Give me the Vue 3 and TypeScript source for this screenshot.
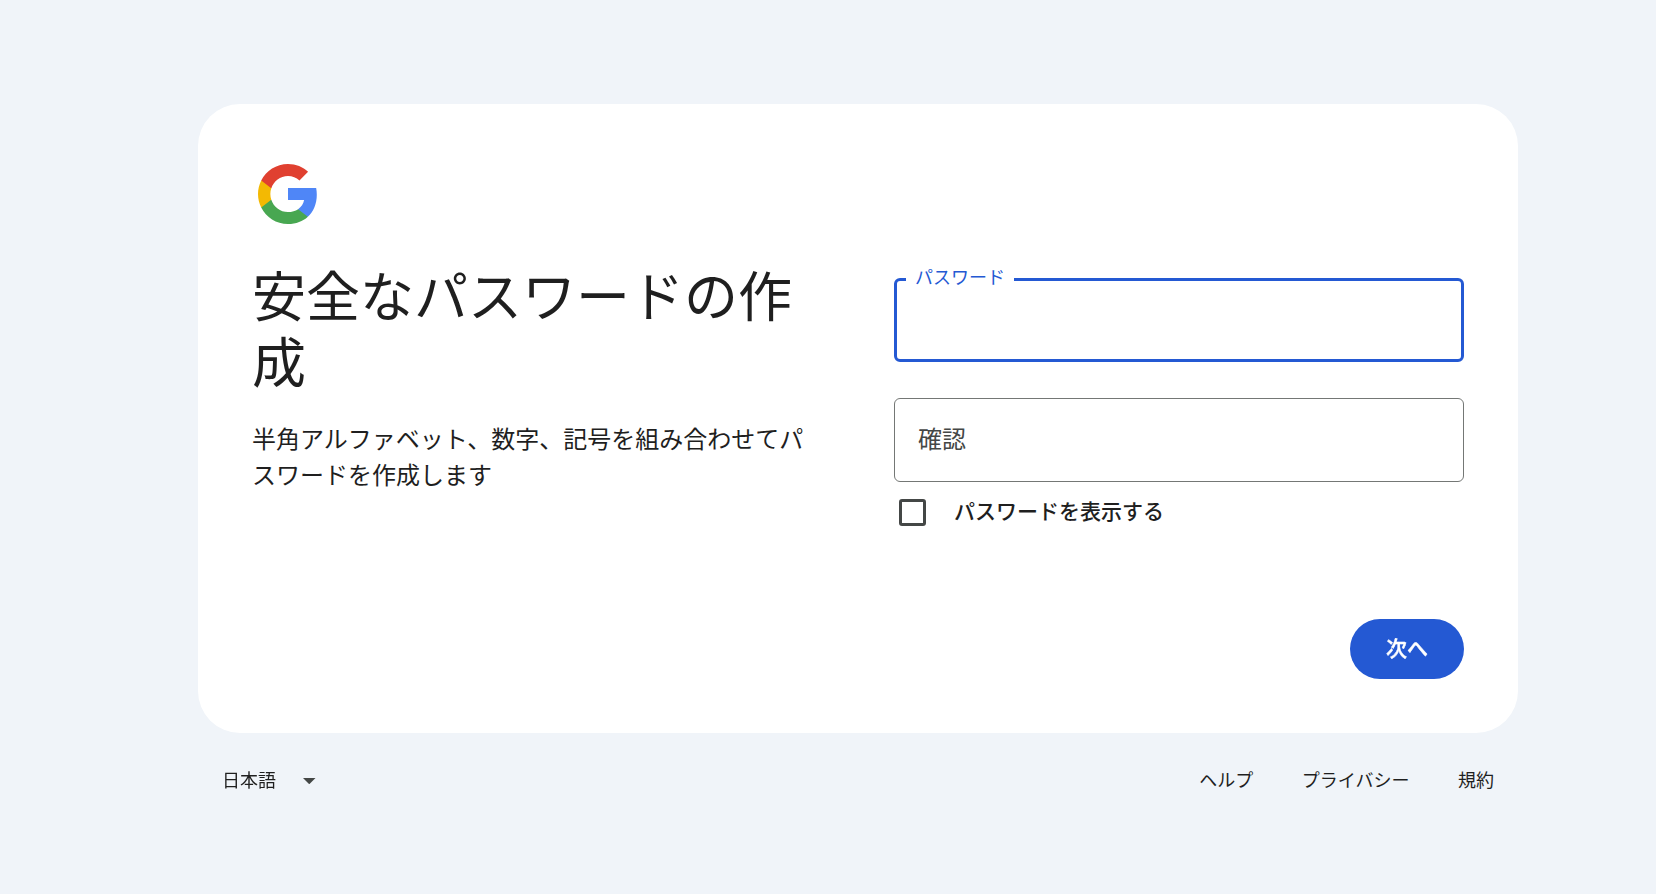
<script setup lang="ts">
import { ref } from 'vue'

interface FooterLink {
  label: string
}

const password = ref('')
const confirmation = ref('')
const showPassword = ref(false)
const links: FooterLink[] = [{ label: 'ヘルプ' }, { label: 'プライバシー' }, { label: '規約' }]
</script>

<template>
  <div class="page">
    <main class="card">
      <svg class="logo" viewBox="0 0 40 48" aria-hidden="true">
        <path fill="#4f86f7" d="M39.2 24.45c0-1.55-.16-3.04-.43-4.45H20v8h10.73c-.45 2.53-1.86 4.68-4 6.11v5.05h6.5c3.78-3.48 5.97-8.62 5.97-14.71z" />
        <path fill="#48a751" d="M20 44c5.4 0 9.92-1.79 13.24-4.84l-6.5-5.05C24.95 35.3 22.67 36 20 36c-5.19 0-9.59-3.51-11.15-8.23h-6.7v5.2C5.43 39.51 12.18 44 20 44z" />
        <path fill="#f3b903" d="M8.85 27.77c-.4-1.19-.62-2.46-.62-3.77s.22-2.58.62-3.77v-5.2h-6.7C.78 17.73 0 20.77 0 24s.78 6.27 2.14 8.97l6.71-5.2z" />
        <path fill="#e04030" d="M20 12c2.93 0 5.55 1.01 7.62 2.98l5.76-5.76C29.92 5.98 25.39 4 20 4 12.18 4 5.43 8.49 2.14 15.03l6.7 5.2C10.41 15.51 14.81 12 20 12z" />
      </svg>
      <div class="columns">
        <section class="intro">
          <h1>安全なパスワードの作成</h1>
          <p>半角アルファベット、数字、記号を組み合わせてパスワードを作成します</p>
        </section>
        <form class="form" @submit.prevent>
          <fieldset class="field active">
            <legend>パスワード</legend>
            <input v-model="password" :type="showPassword ? 'text' : 'password'" aria-label="パスワード" />
          </fieldset>
          <div class="field plain">
            <input v-model="confirmation" :type="showPassword ? 'text' : 'password'" placeholder="確認" />
          </div>
          <label class="check">
            <input v-model="showPassword" type="checkbox" />
            <span>パスワードを表示する</span>
          </label>
        </form>
      </div>
      <div class="actions">
        <button type="button">次へ</button>
      </div>
    </main>
    <footer class="footer">
      <div class="language">
        <span>日本語</span>
        <svg class="arrow" viewBox="0 0 10 5" aria-hidden="true"><path d="M0 0h10L5 5z" fill="#444746" /></svg>
      </div>
      <nav class="links">
        <a v-for="link in links" :key="link.label">{{ link.label }}</a>
      </nav>
    </footer>
  </div>
</template>

<style>
body {
  background: #f0f4f9;
}
</style>

<style scoped>
.page {
  box-sizing: border-box;
  width: 1656px;
  height: 894px;
  padding: 104px 138px 0 198px;
  overflow: hidden;
  background: #f0f4f9;
  color: #1f1f1f;
  font-family: Roboto, "Noto Sans CJK JP", sans-serif;
}

.card {
  box-sizing: border-box;
  display: flex;
  flex-direction: column;
  height: 629px;
  padding: 54px;
  border-radius: 42px;
  background: #fff;
}

.logo {
  flex: none;
  width: 60px;
  height: 72px;
  margin-left: 6px;
}

.columns {
  display: grid;
  grid-template-columns: 570px 570px;
  column-gap: 72px;
}

.intro {
  padding-top: 36px;
}

h1 {
  margin: 0;
  font-size: 54px;
  font-weight: 400;
  line-height: 66px;
}

p {
  margin: 24px 0 0;
  font-size: 24px;
  line-height: 36px;
}

.form {
  padding-top: 48px;
}

.field {
  box-sizing: border-box;
  width: 570px;
  height: 84px;
  margin: 0;
  border-radius: 6px;
}

.active {
  height: 98px;
  margin-top: -14px;
  padding: 0 0 0 9px;
  border: 3px solid #2459d3;
}

legend {
  width: 108px;
  box-sizing: border-box;
  height: 31px;
  padding: 0 9px;
  color: #2459d3;
  font-size: 18px;
  line-height: 27px;
}

.field input {
  box-sizing: border-box;
  width: 100%;
  height: 60px;
  padding: 0 24px;
  border: 0;
  outline: 0;
  background: transparent;
  color: #1f1f1f;
  font: 24px/36px Roboto, "Noto Sans CJK JP", sans-serif;
}

.plain {
  margin-top: 36px;
  border: 1px solid #747775;
}

.plain input {
  height: 82px;
  padding: 0 23px;
}

.plain input::placeholder {
  color: #444746;
  opacity: 1;
}

.check {
  display: flex;
  align-items: center;
  gap: 28px;
  height: 60px;
  padding-left: 5px;
  font-size: 21px;
  font-weight: 500;
  line-height: 30px;
}

.check input {
  appearance: none;
  box-sizing: border-box;
  width: 27px;
  height: 27px;
  margin: 0;
  border: 3px solid #444746;
  border-radius: 3px;
}

.actions {
  display: flex;
  justify-content: flex-end;
  margin-top: auto;
}

button {
  width: 114px;
  height: 60px;
  padding: 0;
  border: 0;
  border-radius: 30px;
  background: #2459d3;
  color: #fff;
  font: 500 21px/30px Roboto, "Noto Sans CJK JP", sans-serif;
  -webkit-text-stroke: 0.4px #fff;
  will-change: transform;
}

.footer {
  display: flex;
  align-items: center;
  justify-content: space-between;
  height: 96px;
  padding: 0 24px;
  font-size: 18px;
  line-height: 24px;
}

.language {
  display: flex;
  align-items: center;
  gap: 27px;
  will-change: transform;
}

.arrow {
  width: 12.5px;
  height: 6.25px;
}

.links {
  display: flex;
  gap: 48.5px;
}
</style>
